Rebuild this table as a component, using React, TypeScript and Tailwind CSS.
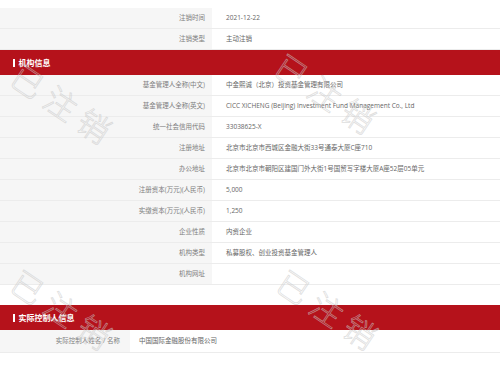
const topRows = [
  { label: '注销时间', value: '2021-12-22' },
  { label: '注销类型', value: '主动注销' },
];

const orgRows = [
  { label: '基金管理人全称(中文)', value: '中金熙诚（北京）投资基金管理有限公司' },
  { label: '基金管理人全称(英文)', value: 'CICC XICHENG (Beijing) Investment Fund Management Co., Ltd' },
  { label: '统一社会信用代码', value: '33038625-X' },
  { label: '注册地址', value: '北京市北京市西城区金融大街33号通泰大厦C座710' },
  { label: '办公地址', value: '北京市北京市朝阳区建国门外大街1号国贸写字楼大厦A座52层05单元' },
  { label: '注册资本(万元)(人民币)', value: '5,000' },
  { label: '实缴资本(万元)(人民币)', value: '1,250' },
  { label: '企业性质', value: '内资企业' },
  { label: '机构类型', value: '私募股权、创业投资基金管理人' },
  { label: '机构网址', value: '' },
];

function Row({ label, value }: { label: string; value: string }) {
  return (
    <div className="flex h-[21px] border-b border-[#ececec]">
      <div className="w-[212px] shrink-0 bg-[#f6f6f6] flex items-center justify-end pr-[7px] text-[#808080]">
        {label}
      </div>
      <div className="flex-1 flex items-center pl-[12px] text-[#666] border-l-2 border-white">{value}</div>
    </div>
  );
}

function SectionBar({ title }: { title: string }) {
  return (
    <div className="h-[25px] bg-[#b5121b] flex items-center pl-[13px] gap-[4px] text-white text-[8px] font-bold">
      <span className="w-[1.5px] h-[8px] bg-white" />
      <span>{title}</span>
    </div>
  );
}

// hollow "已注销" stamp laid over the table
function Watermark({ x, y }: { x: number; y: number }) {
  return (
    <div
      className="absolute -translate-x-1/2 -translate-y-1/2 rotate-[34deg] text-[32px] font-light tracking-[8px] text-transparent [-webkit-text-stroke:0.8px_rgba(200,200,200,0.6)] pointer-events-none whitespace-nowrap"
      style={{ left: x, top: y }}
    >
      已注销
    </div>
  );
}

export default function App() {
  return (
    <div className="relative w-[500px] h-[366px] overflow-hidden bg-white font-['Open_Sans','Noto_Sans_CJK_SC',sans-serif] text-[6.5px]">
      <div className="pt-[8px]">
        {topRows.map((r) => (
          <Row key={r.label} label={r.label} value={r.value} />
        ))}
        <SectionBar title="机构信息" />
        {orgRows.map((r) => (
          <Row key={r.label} label={r.label} value={r.value} />
        ))}
        <div className="h-[20px]" />
        <SectionBar title="实际控制人信息" />
        <div className="flex h-[23px] border-b border-[#ececec]">
          <div className="w-[130px] shrink-0 bg-[#f6f6f6] flex items-center justify-end pr-[10px] text-[#808080]">
            实际控制人姓名 / 名称
          </div>
          <div className="flex-1 flex items-center pl-[9px] text-[#666]">中国国际金融股份有限公司</div>
        </div>
      </div>
      <Watermark x={64} y={106} />
      <Watermark x={328} y={96} />
      <Watermark x={64} y={312} />
      <Watermark x={330} y={312} />
    </div>
  );
}
